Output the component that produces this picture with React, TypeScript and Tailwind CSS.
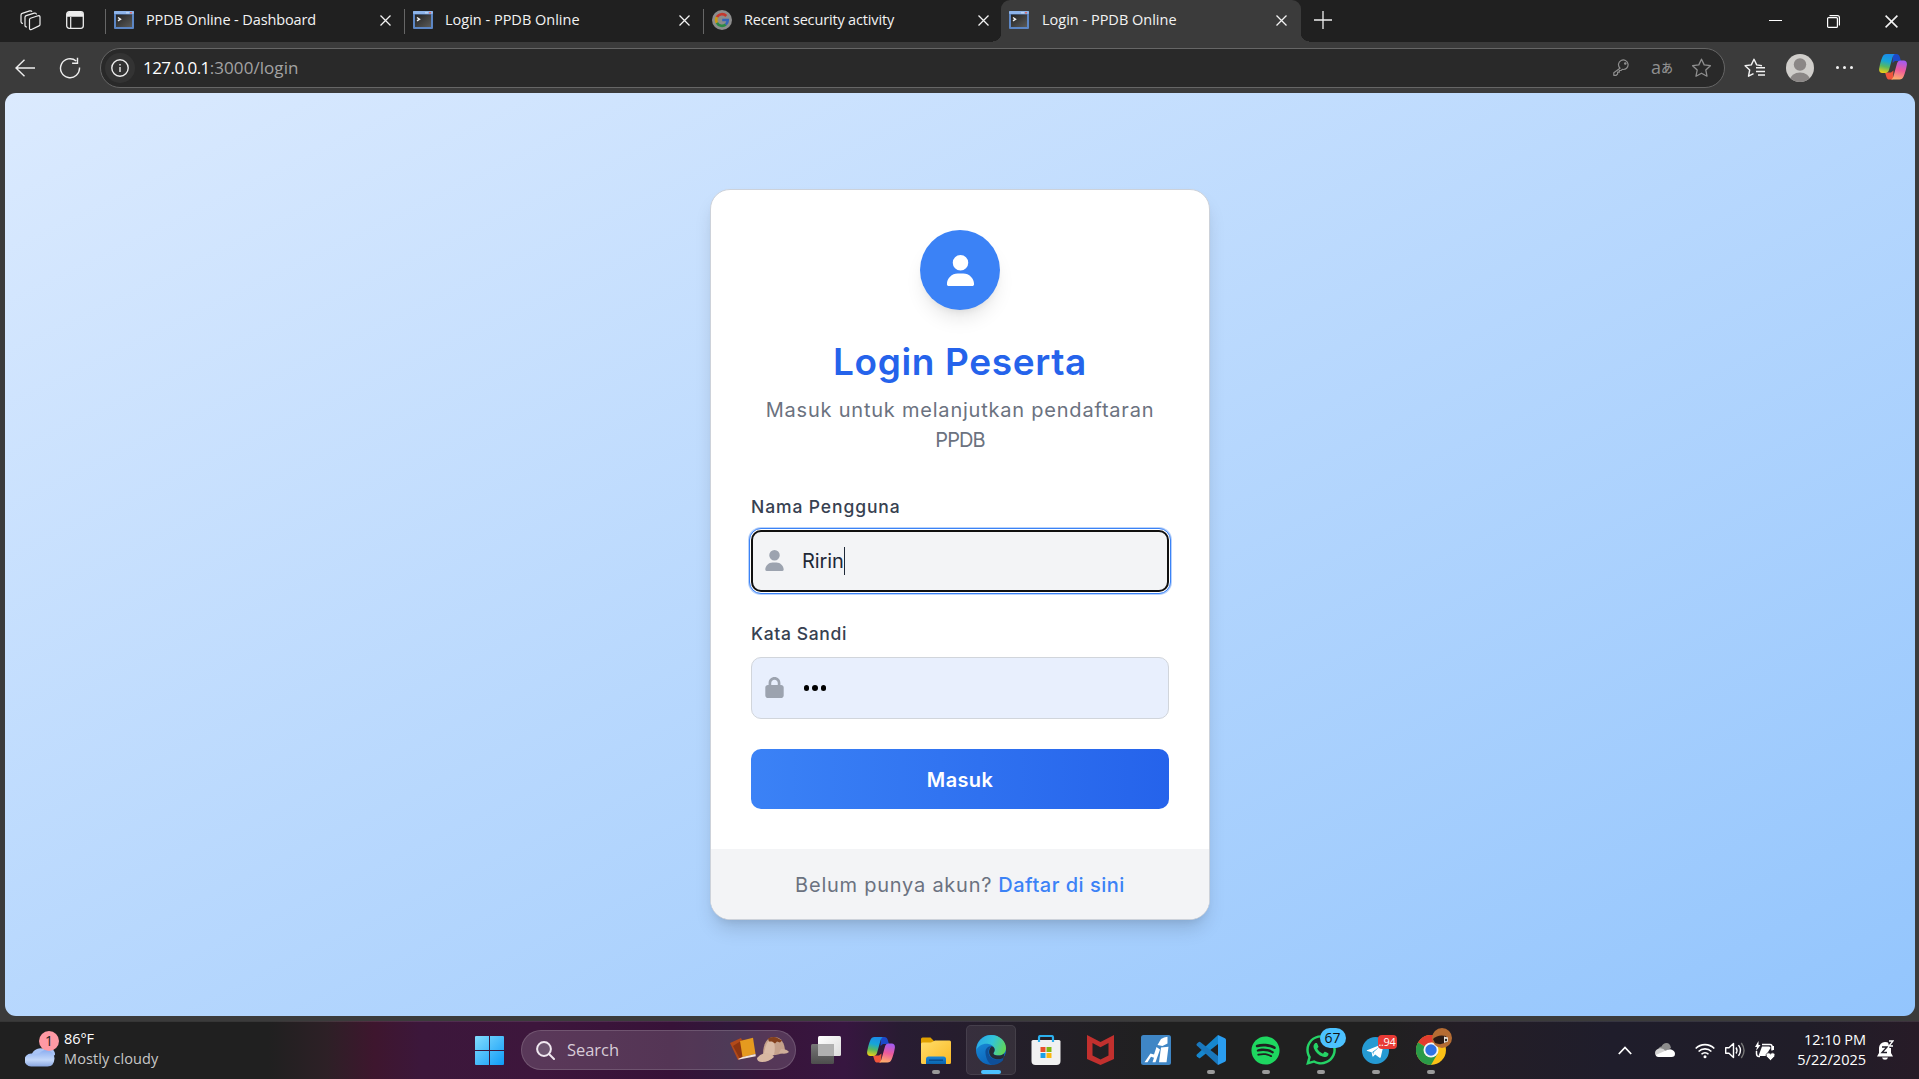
import React from "react";
import { FaSpotify, FaWhatsapp } from "react-icons/fa";
import { FaLock, FaUser } from "react-icons/fa6";

function TerminalFavicon() {
  return (
    <svg width="20" height="18" viewBox="0 0 20 18" className="shrink-0">
      <defs>
        <linearGradient id="term" x1="0" y1="0" x2="1" y2="1">
          <stop offset="0" stopColor="#222" />
          <stop offset="1" stopColor="#5a5a58" />
        </linearGradient>
      </defs>
      <rect width="20" height="18" rx="1" fill="#5c86c4" />
      <rect width="20" height="3" rx="1" fill="#8db4ea" />
      <rect x="16" y="1" width="2" height="1.5" fill="#d86a6a" />
      <rect x="12" y="1" width="3" height="1.5" fill="#b9d2f2" />
      <rect x="2" y="3.5" width="16" height="12.5" fill="url(#term)" />
      <path d="M4 6.5l2.5 1.7L4 9.8" fill="none" stroke="#f2f2f2" strokeWidth="1.4" />
    </svg>
  );
}

function GoogleFavicon() {
  return (
    <svg width="20" height="20" viewBox="0 0 20 20" className="shrink-0">
      <circle cx="10" cy="10" r="10" fill="#8d8d8d" />
      <g fill="none" strokeWidth="2.6">
        <path d="M14.3 6A5.8 5.8 0 0 0 4.9 7.2" stroke="#c5382e" />
        <path d="M4.9 7.2a5.8 5.8 0 0 0 0 5.6" stroke="#c99a12" />
        <path d="M4.9 12.8a5.8 5.8 0 0 0 8.9 1.6" stroke="#2b8a45" />
        <path d="M13.8 14.4A5.7 5.7 0 0 0 15.8 10H10.2" stroke="#3564b8" />
      </g>
    </svg>
  );
}

function CloseIcon({ size = 11 }: { size?: number }) {
  return (
    <svg width={size} height={size} viewBox="0 0 11 11" className="shrink-0">
      <path d="M.5.5l10 10M10.5.5l-10 10" stroke="#f3f3f3" strokeWidth="1.3" />
    </svg>
  );
}

function Copilot({ size }: { size: number }) {
  return (
    <svg width={size} height={size * 0.93} viewBox="0 0 28 26" className="shrink-0">
      <defs>
        <linearGradient id="cpA" x1="0.4" y1="0" x2="0.2" y2="1">
          <stop offset="0" stopColor="#1b8de8" />
          <stop offset=".35" stopColor="#16a5d8" />
          <stop offset=".65" stopColor="#58b860" />
          <stop offset="1" stopColor="#f5cf13" />
        </linearGradient>
        <linearGradient id="cpB" x1="0.6" y1="0" x2="0.4" y2="1">
          <stop offset="0" stopColor="#a35bf0" />
          <stop offset=".5" stopColor="#ee5a9a" />
          <stop offset="1" stopColor="#ffae6b" />
        </linearGradient>
      </defs>
      <path d="M14 0h3.4c1.8 0 2.7 1 3.2 2.6L22 7h-6l-2.5 2z" fill="#1c49c8" />
      <path d="M14 25.500h-3.400c-1.800 0-2.700-1-3.200-2.600L6 18.500h6l2.500-2z" fill="#f0553c" />
      <path d="M7.500 0H16c-1.400.6-2 2-2.500 3.600L10 16c-.6 1.800-1.600 2.900-3.600 2.900H3.300C.8 18.900-.3 17 .2 14.300 1 9.900 2 6.200 3.400 2.900 4.200 1 5.400 0 7.500 0z" fill="url(#cpA)" />
      <path d="M20.500 25.500H12c1.400-.6 2-2 2.500-3.600L18 9.500c.6-1.800 1.600-2.900 3.600-2.900h3.100c2.500 0 3.600 1.900 3.100 4.600-.8 4.400-1.800 8.100-3.200 11.400-.8 1.900-2 2.900-4.100 2.900z" fill="url(#cpB)" />
    </svg>
  );
}

type TabProps = { title: string; google?: boolean; tracking?: string };

function Tab({ title, google, tracking = "" }: TabProps) {
  return (
    <div className="flex h-[42px] w-[299px] items-center pb-[3px]">
      <div className="h-[25px] w-px bg-[#666] mt-1" />
      <div className="ml-2 flex w-5">{google ? <GoogleFavicon /> : <TerminalFavicon />}</div>
      <span className={"ml-3 flex-1 whitespace-nowrap text-[14.5px] leading-5 " + tracking}>{title}</span>
      <div className="mr-[13px] mt-0.5">
        <CloseIcon />
      </div>
    </div>
  );
}

function TabBar() {
  return (
    <div className="flex h-[42px] bg-[#202020] text-[#f3f3f3]">
      <div className="flex w-[105px] items-center gap-[25px] pl-5 pb-0.5">
        <svg width="21" height="21" viewBox="0 0 21 21" fill="none" stroke="#eee" strokeWidth="1.2" strokeLinejoin="round">
          <path d="M10.500 8.200l7.500-2.400q2-.5 2 1.300v7.400q0 1-1 1.400l-7.500 3.600q-2 .7-2-1.300V9.700q0-1.100 1-1.500z" />
          <path d="M7 17q-2 0-2-1.600V7.200q0-1.200 1.200-1.600l8-2.500q2-.4 2.300 1.400" />
          <path d="M3 13.500q-2-.2-2-1.800V5q0-1.200 1.200-1.600l7.500-2.500q1.800-.4 2.300.9" />
        </svg>
        <svg width="18" height="18" viewBox="0 0 18 18" fill="none">
          <rect x=".7" y=".7" width="16.600" height="16.600" rx="2.500" stroke="#eee" strokeWidth="1.300" />
          <path d="M1 5.800V3q0-2 2-2h12q2 0 2 2v2.800z" fill="#eee" />
          <path d="M4.700 6v11" stroke="#eee" strokeWidth="1.200" />
        </svg>
      </div>
      <Tab title="PPDB Online - Dashboard" tracking="tracking-[-0.110px]" />
      <Tab title="Login - PPDB Online" />
      <Tab title="Recent security activity" google tracking="tracking-[-0.161px]" />
      <div className="-ml-[9px] flex items-end">
        <div className="h-[9px] w-2 bg-[radial-gradient(circle_at_0_0,#202020_8px,#3b3b3b_8.500px)]" />
        <div className="flex h-[42px] w-[300px] items-center rounded-t-[9px] bg-[#3b3b3b] pb-[3px] pl-2">
          <TerminalFavicon />
          <span className="ml-[13px] flex-1 whitespace-nowrap text-[14.500px] leading-5">Login - PPDB Online</span>
          <div className="mr-[14px] mt-0.5">
            <CloseIcon />
          </div>
        </div>
        <div className="h-[9px] w-2 bg-[radial-gradient(circle_at_100%_0,#202020_8px,#3b3b3b_8.500px)]" />
      </div>
      <svg width="18" height="18" viewBox="0 0 18 18" className="ml-[5px] mt-[11px]">
        <path d="M9 0v18M0 9h18" stroke="#eee" strokeWidth="1.300" />
      </svg>
      <div className="ml-auto flex items-center gap-[45px] pr-[21px] pt-px">
        <div className="h-px w-[13px] bg-white -mt-0.5" />
        <svg width="13" height="13" viewBox="0 0 13 13" fill="none" stroke="#fff" strokeWidth="1.200">
          <rect x=".6" y="2.600" width="9.800" height="9.800" rx="1" />
          <path d="M2.500.6h8q1.900 0 1.900 1.900v8" />
        </svg>
        <CloseIcon size={13} />
      </div>
    </div>
  );
}

const STAR = "M10 1.200l2.700 5.700 6.200.8-4.600 4.300 1.200 6.200L10 15.200l-5.500 3 1.200-6.200L1.100 7.700l6.200-.8z";

function Toolbar() {
  return (
    <div className="flex h-[51px] items-center bg-[#3b3b3b]">
      <svg width="21" height="18" viewBox="0 0 21 18" className="ml-[15px]" fill="none" stroke="#eee" strokeWidth="1.400">
        <path d="M20 9H1M9.500.7L1 9l8.500 8.300" />
      </svg>
      <svg width="22" height="22" viewBox="0 0 22 22" className="ml-[23px]" fill="none" stroke="#eee" strokeWidth="1.400">
        <path d="M20.500 10.500A9.500 9.500 0 1 1 17.200 4M18.500.8v5.400h-5.400" />
      </svg>
      <div className="ml-[19px] flex h-10 w-[1625px] items-center rounded-full border border-[#666] bg-[#292929] pl-1 pr-3">
        <div className="flex size-[30px] items-center justify-center rounded-full bg-[#333]">
          <svg width="18" height="18" viewBox="0 0 18 18" fill="none" stroke="#eee" strokeWidth="1.400">
            <circle cx="9" cy="9" r="8.200" />
            <path d="M9 8v5M9 5v1.500" />
          </svg>
        </div>
        <div className="ml-2 flex flex-1 whitespace-nowrap text-[17px] leading-6">
          <span className="tracking-[-0.55px] text-white">127.0.0.1</span>
          <span className="tracking-[0.06px] text-[#a3a3a3]">:3000/login</span>
        </div>
        <div className="flex items-center text-[#8f8f8f]">
          <svg width="17" height="17" viewBox="0 0 17 17" fill="none" stroke="currentColor" strokeWidth="1.200">
            <path d="M7 9.200A4.800 4.800 0 1 1 9.300 10.400L8 11.500H6.300v1.700H4.600V15L3.200 16.300H.8v-2.600z" strokeLinejoin="round" />
            <circle cx="12.300" cy="4.500" r=".7" fill="currentColor" />
          </svg>
          <div className="ml-[21px] flex w-[22px] items-center leading-5">
            <span className="text-[18px] -mt-0.5">a</span>
            <span className="font-['Noto_Sans_CJK_JP',sans-serif] text-[12px] font-medium">あ</span>
          </div>
          <svg width="21" height="20" viewBox="0 0 20 20" className="ml-[18px]" fill="none" stroke="currentColor" strokeWidth="1.300" strokeLinejoin="round">
            <path d={STAR} />
          </svg>
        </div>
      </div>
      <svg width="21" height="20" viewBox="0 0 21 20" className="ml-[19px]" fill="none" stroke="#f3f3f3" strokeWidth="1.400" strokeLinejoin="round">
        <path d="M18 7.700L12.700 6.900 10 1.200 7.300 6.900l-6.200.8 4.600 4.300-1.200 6.200 5-2.600M12 9.700h9M12 13.500h9M14 17h7" />
      </svg>
      <svg width="28" height="28" viewBox="0 0 28 28" className="ml-[21px]">
        <clipPath id="face"><circle cx="14" cy="14" r="14" /></clipPath>
        <g clipPath="url(#face)">
          <rect width="28" height="28" fill="#d0cecb" />
          <circle cx="14" cy="10.500" r="6.200" fill="#8b8786" />
          <ellipse cx="14" cy="26" rx="10" ry="7.500" fill="#8b8786" />
        </g>
      </svg>
      <div className="ml-[22px] flex gap-1">
        <div className="size-[3px] rounded-full bg-[#f3f3f3]" />
        <div className="size-[3px] rounded-full bg-[#f3f3f3]" />
        <div className="size-[3px] rounded-full bg-[#f3f3f3]" />
      </div>
      <div className="ml-[26px]">
        <Copilot size={28} />
      </div>
    </div>
  );
}

function LoginCard() {
  return (
    <div className="flex h-[731px] w-[500px] flex-col overflow-hidden rounded-[20px] border border-[#cdd2da] bg-white font-[Inter,sans-serif] shadow-[0_12px_19px_-4px_rgba(0,0,0,0.15),0_5px_8px_-5px_rgba(0,0,0,0.1)]">
      <div className="flex flex-1 flex-col items-center px-10 pt-10">
        <div className="flex size-20 items-center justify-center rounded-full bg-[#3b82f6] shadow-[0_12px_19px_-4px_rgba(0,0,0,0.1),0_5px_8px_-5px_rgba(0,0,0,0.1)]">
          <FaUser className="size-[31px] text-white" />
        </div>
        <h1 className="mt-[29px] whitespace-nowrap text-[37px] font-semibold leading-[45px] tracking-[0.620px] text-[#2563eb]">Login Peserta</h1>
        <p className="mt-[11px] text-center text-[20px] leading-[30px] text-[#6b7280]">
          <span className="whitespace-nowrap tracking-[0.780px]">Masuk untuk melanjutkan pendaftaran</span>
          <br />
          <span className="tracking-[-0.900px]">PPDB</span>
        </p>
        <div className="mt-[39px] w-full">
          <div className="text-[17.500px] font-medium leading-[26px] tracking-[0.900px] text-[#374151]">Nama Pengguna</div>
          <div className="mt-2.5 flex h-[62px] items-center rounded-[10px] border-2 border-[#101010] bg-[#f3f4f6] pl-[11px] outline-1 outline-offset-1 outline-[#3b82f6] shadow-[0_0_0_1px_#fff,0_0_0_3px_#b9d3fb]">
            <FaUser className="mb-px size-[21px] text-[#9ca3af]" />
            <span className="ml-[17px] text-[20px] tracking-[-0.100px] text-[#1f2937]">Ririn</span>
            <span className="h-7 w-px bg-[#1f2937]" />
          </div>
        </div>
        <div className="mt-[29px] w-full">
          <div className="text-[17.500px] font-medium leading-[26px] tracking-[0.640px] text-[#374151]">Kata Sandi</div>
          <div className="mt-2.5 flex h-[62px] items-center rounded-[10px] border border-[#d1d5db] bg-[#e8effd] pl-3">
            <FaLock className="mb-px size-[21px] text-[#9ca3af]" />
            <div className="ml-[18.500px] flex gap-[3px]">
              <div className="size-[5.500px] rounded-full bg-black" />
              <div className="size-[5.500px] rounded-full bg-black" />
              <div className="size-[5.500px] rounded-full bg-black" />
            </div>
          </div>
        </div>
        <button className="mt-[30px] h-[60px] w-full rounded-[10px] bg-[linear-gradient(90deg,#3b82f6,#2563eb)] pt-px text-[20px] font-semibold tracking-[0.350px] text-white">Masuk</button>
      </div>
      <div className="flex h-[70px] items-center justify-center whitespace-nowrap bg-[#f3f4f6] pt-px text-[20px] text-[#6b7280]">
        <span className="tracking-[0.760px]">Belum punya akun?</span>
        <span className="ml-1.5 font-medium tracking-[0.500px] text-[#3b82f6]">Daftar di sini</span>
      </div>
    </div>
  );
}

function DockItem({ children, open, active }: { children: React.ReactNode; open?: boolean; active?: boolean }) {
  return (
    <div className="flex w-[55px] justify-center">
      <div className={active ? "relative flex size-[50px] items-center justify-center rounded-[5px] border border-white/8 bg-white/8" : "relative flex size-[50px] items-center justify-center"}>
        {children}
        {active && <div className="absolute bottom-0 h-1 w-5 rounded-full bg-[#4cc2ff]" />}
        {open && <div className="absolute bottom-px h-1 w-2 rounded-full bg-[#9a9a9a]" />}
      </div>
    </div>
  );
}

function DockIcons() {
  return (
    <div className="flex items-center">
      <DockItem>
        <svg width="30" height="28" viewBox="0 0 30 28">
          <defs>
            <linearGradient id="tvA" x1="0" y1="0" x2="0" y2="1"><stop offset="0" stopColor="#777" /><stop offset="1" stopColor="#4d4d4d" /></linearGradient>
            <linearGradient id="tvB" x1="0" y1="0" x2="1" y2="1"><stop offset="0" stopColor="#fff" /><stop offset="1" stopColor="#dcdcdc" /></linearGradient>
          </defs>
          <rect x="7" y="0" width="23" height="20" rx="1.500" fill="url(#tvB)" />
          <rect x="0" y="8" width="23" height="20" rx="1.500" fill="url(#tvA)" />
          <rect x="7" y="8" width="16" height="12" fill="#b0b0b0" />
        </svg>
      </DockItem>
      <DockItem><Copilot size={28} /></DockItem>
      <DockItem open>
        <svg width="30" height="27" viewBox="0 0 30 27">
          <defs>
            <linearGradient id="fo" x1="0" y1="0" x2="1" y2="1"><stop offset="0" stopColor="#ffdd6b" /><stop offset="1" stopColor="#fbb924" /></linearGradient>
            <linearGradient id="fb" x1="0" y1="0" x2="0" y2="1"><stop offset="0" stopColor="#1a87d8" /><stop offset="1" stopColor="#0a63ad" /></linearGradient>
          </defs>
          <path d="M0 2Q0 .5 1.500.500H9.500L13 4H28v6H0z" fill="#e0a000" />
          <path d="M0 7Q0 5.500 1.500 5.500H10L14 3.500H28.500Q30 3.500 30 5V25.500Q30 27 28.500 27H1.500Q0 27 0 25.500z" fill="url(#fo)" />
          <path d="M5 27V22q0-2.500 2.500-2.500h15Q25 19.500 25 22V27z" fill="url(#fb)" />
          <path d="M8 23.200H22" stroke="#0a4a8a" strokeWidth="1.400" />
        </svg>
      </DockItem>
      <DockItem active>
        <svg width="30" height="30" viewBox="0 0 30 30">
          <defs>
            <linearGradient id="eg" x1="0" y1="0.300" x2="1" y2="0.600"><stop offset="0" stopColor="#2aa9e8" /><stop offset=".5" stopColor="#32c4d8" /><stop offset="1" stopColor="#62d654" /></linearGradient>
            <linearGradient id="eb" x1="0" y1="0" x2="0.500" y2="1"><stop offset="0" stopColor="#1c93de" /><stop offset="1" stopColor="#0b62b8" /></linearGradient>
          </defs>
          <circle cx="15" cy="15" r="15" fill="url(#eb)" />
          <path d="M1 11C3 4 9 0 15 0c9 0 15 6.500 15 13 0 5-3.500 7.500-7.500 7.500-4 0-5.500-1.600-5-2.600C20 15 18.500 10 12.500 9 7 8.200 2 11 .5 15Q.4 13 1 11z" fill="url(#eg)" />
          <path d="M9.500 18C9 12.500 13 11 15.500 11.200 12 13 10.500 20 16.500 23.500c4 2.200 8.500 1.200 10.800-.3.700-.3 1.200.2.700.9C25 28.500 20 30 16.500 30 12.500 29 9.800 23 9.500 18z" fill="#0f4f98" />
          <path d="M17.500 17.900c-.5 1 1 2.600 5 2.600 2.400 0 4.500-.8 5.900-2.300L27.500 23c-4 2-9 1.500-11.500-.5-4-3.500-3.500-8.500-.5-11.300 2.500.3 4.500 3.300 2 6.700z" fill="#252b35" />
          <path d="M30 18.500l1 4-4 3 .5-3z" fill="#343038" />
        </svg>
      </DockItem>
      <DockItem>
        <svg width="30" height="30" viewBox="0 0 30 30">
          <path d="M8 7V2.500Q8 1 9.500 1h11Q22 1 22 2.500V7" fill="none" stroke="#2bb0ee" strokeWidth="2.200" />
          <path d="M.5 6.500Q.5 5 2 5H28q1.500 0 1.500 1.500V26q0 4-4 4H4.500q-4 0-4-4z" fill="#f1f1f1" />
          <path d="M8 5v2M22 5v2" stroke="#2bb0ee" strokeWidth="2.200" />
          <path fill="#e8502a" d="M9.500 12h5v5h-5z" /><path fill="#80b813" d="M15.500 12h5v5h-5z" />
          <path fill="#1a9fe6" d="M9.500 18h5v5h-5z" /><path fill="#fbb70f" d="M15.500 18h5v5h-5z" />
        </svg>
      </DockItem>
      <DockItem>
        <svg width="27" height="30" viewBox="0 0 27 30">
          <path d="M0 0L13.500 7 27 0V24L13.500 30 0 24zM5.500 8V20.500L13.500 24.500 21.500 20.500V8L13.500 12.300z" fillRule="evenodd" fill="#c2302e" />
        </svg>
      </DockItem>
      <DockItem>
        <svg width="30" height="30" viewBox="0 0 30 30">
          <rect width="30" height="30" rx="2.500" fill="#3f86c5" />
          <path d="M16.500 10L20 4q3-2 6.500-2.200V8.500L21.500 11z" fill="#fff" />
          <path d="M3.500 27.200L9.500 18.500l3.500 1 2.500-7.500 3.500 2.500-4.500 12.700h-3l1.500-4.500-3-1-3.500 5.500z" fill="#fff" />
          <path d="M20 12.500l7.500-.8-2 15.500H18z" fill="#fff" />
        </svg>
      </DockItem>
      <DockItem open>
        <svg width="30" height="30" viewBox="0 0 30 30">
          <path d="M22 0L.8 19.600q-.8.800 0 1.600l2 1.700q.6.500 1.400 0L22 9z" fill="#1687ce" />
          <path d="M22 30L.8 10.400q-.8-.8 0-1.600l2-1.700q.6-.5 1.400 0L22 21z" fill="#1a78bd" />
          <path d="M22 0L29 3.200Q30 3.700 30 5V25Q30 26.300 29 26.800L22 30z" fill="#2a9df0" />
        </svg>
      </DockItem>
      <DockItem open><FaSpotify className="size-[29px] text-[#1ed760]" /></DockItem>
      <DockItem open>
        <FaWhatsapp className="size-[34px] text-[#25d366]" />
        <div className="absolute right-0 top-[3px] flex h-5 w-[26px] items-center justify-center rounded-full bg-[#4cc2ff] text-[14px] leading-5 text-[#111]">67</div>
      </DockItem>
      <DockItem open>
        <svg width="27" height="27" viewBox="0 0 27 27">
          <circle cx="13.500" cy="13.500" r="13.500" fill="#259ad3" />
          <path d="M5 13.200L20.500 7q1.300-.4 1 1.200L18.800 20q-.4 1.300-1.600.6l-4-3-2 2q-.6.500-.8-.5l-.8-3.900L5.200 14q-1-.4-.2-.8zm5.400 1.700l.9 2.900.3-2.500 6.500-6z" fill="#fff" />
        </svg>
        <div className="absolute right-1 top-2.5 flex h-[14px] w-[19px] items-center justify-center rounded-[4px] bg-[#e83a35] text-[11px] leading-[14px] tracking-[-0.3px] text-white">..94</div>
      </DockItem>
      <DockItem open>
        <svg width="30" height="30" viewBox="0 0 30 30">
          <circle cx="15" cy="15" r="15" fill="#fbc116" />
          <path d="M15 15L2 7.500A15 15 0 0 1 28 7.500H15z" fill="#e33b2e" />
          <path d="M2 7.500A15 15 0 0 0 15 30l6.500-11.200L15 15z" fill="#2a9a48" />
          <circle cx="15" cy="15" r="7.500" fill="#f4f4f4" /><circle cx="15" cy="15" r="5.700" fill="#2f72e4" />
        </svg>
        <svg width="20" height="20" viewBox="0 0 20 20" className="absolute right-1 top-[3px]">
          <circle cx="10" cy="10" r="10" fill="#b56c33" />
          <path d="M1 11q5-5 13-3l2 5q-6 5-13 2z" fill="#2b1b16" />
          <path d="M12 8.500l4 1v4l-4 1.500z" fill="#e8e0d8" /><circle cx="14" cy="12" r="1.200" fill="#222" />
        </svg>
      </DockItem>
    </div>
  );
}

function Taskbar() {
  return (
    <div className="relative flex h-[58px] items-center border-t border-white/10 bg-[linear-gradient(90deg,#202020_0%,#202020_14%,#2d2026_17%,#3e162e_19.500%,#3c173b_22%,#3d163c_28%,#371238_35%,#30183a_38%,#38143a_40%,#371640_44%,#281c32_47%,#231f28_54%,#202020_60%,#202020_72%,#241e26_76%,#1f1d2b_84%,#201d28_94%,#271b27_100%)] pb-px text-[14.500px] text-white">
      <div className="flex w-[467px] items-center pl-[25px] pb-0.5">
        <div className="relative">
          <svg width="34" height="36" viewBox="0 0 34 36" className="block">
            <defs><linearGradient id="cl" x1="0" y1="0" x2="0" y2="1"><stop offset="0" stopColor="#8caef0" /><stop offset=".6" stopColor="#c3d8fa" /><stop offset="1" stopColor="#8aa7e0" /></linearGradient></defs>
            <circle cx="23" cy="15" r="6.500" fill="#f5820d" />
            <path d="M6.500 24A9.500 9.500 0 0 1 20 18.500q2-1.500 5-1.200a6.800 6.800 0 0 1 5 7z" fill="#a9c4f6" />
            <path d="M6 35.500a6.500 6.500 0 0 1 0-13q2.500-.2 4 1 2-1 4.500-1 2-3.500 7-3.500a8.300 8.300 0 0 1 8 8.500q-.5 8-7 8z" fill="url(#cl)" />
          </svg>
          <div className="absolute left-[14px] top-0 flex size-5 items-center justify-center rounded-full bg-[#ff99a4] text-[14px] leading-5 text-[#1d1d1d]">1</div>
        </div>
        <div className="ml-[5px] leading-5">
          <div className="tracking-[-0.070px]">86°F</div>
          <div className="tracking-[0.124px] text-[#c8c8c8]">Mostly cloudy</div>
        </div>
      </div>
      <svg width="29" height="29" viewBox="0 0 29 29" className="ml-2">
        <defs><linearGradient id="win" x1="0" y1="0" x2="1" y2="1"><stop offset="0" stopColor="#82dcfd" /><stop offset="1" stopColor="#0f9bf8" /></linearGradient></defs>
        <path d="M0 1q0-1 1-1h13v14H0zM15 0h13q1 0 1 1v13H15zM0 15h14v14H1q-1 0-1-1zM15 15h14v13q0 1-1 1H15z" fill="url(#win)" />
      </svg>
      <div className="ml-[17px] flex h-10 w-[275px] items-center rounded-full border border-white/15 bg-white/15 pl-[14px] pr-1.5">
        <svg width="19" height="19" viewBox="0 0 19 19" fill="none" stroke="#f0e8f0" strokeWidth="2" strokeLinecap="round">
          <circle cx="8" cy="8" r="6.900" fill="#6d5570" /><path d="M13 13l5 5" />
        </svg>
        <span className="ml-[12px] flex-1 text-[16.500px] tracking-[-0.040px] text-[#d8ccd8]">Search</span>
        <svg width="59" height="26" viewBox="0 0 59 26">
          <path d="M0 6L11 1l8 17-11 5z" fill="#b24a1a" /><path d="M3 9L14 2l5 16-9 4z" fill="#8d3511" />
          <path d="M10 4L23 .8 25.500 17 12.500 20z" fill="#e59a1f" /><path d="M8 22l4.500-2 13-3 .3 2.300L9 22.500z" fill="#f2e4dc" />
          <path d="M33 17C33 7 37 0 44 0s11 6 11 15q-9 5-22 2z" fill="#c5a18b" />
          <path d="M34 16q2-13 9-15 3 9 1 17-5 1-10-2z" fill="#dabba6" />
          <path d="M38 1.500q4-2 8-1.200l6 3.200-2 2-3-1-2 2-3-2-3 0z" fill="#84401d" />
          <path d="M27 21q4-5 10-5 6 1 7 4-5 5-12 5-5 0-5-4z" fill="#d8b8a2" />
          <path d="M51 12q6 0 8 3-3 3-10 1z" fill="#cfae99" />
        </svg>
      </div>
      <div className="ml-[2px]"><DockIcons /></div>
      <div className="absolute right-0 top-0 flex h-[57px] items-center pr-[25px]">
        <svg width="14" height="9" viewBox="0 0 14 9" className="mr-[23px]" fill="none" stroke="#fff" strokeWidth="1.800"><path d="M.8 8L7 1.500 13.200 8" /></svg>
        <svg width="20" height="14" viewBox="0 0 20 14" className="mr-5 mb-0.5">
          <path d="M3 7Q4 3.500 6.500 3.500 8 0 11.500 0q3.500 0 4.500 5L9 9z" fill="#8c8c8c" />
          <path d="M4 13.500Q0 13.500 0 10t4-4.500q4-1 7 3l-4 5z" fill="#d2d2d2" />
          <path d="M3.500 14Q1 14 .8 12L12 7q4-2 6.500.8 1.500 1.200 1.500 3 0 3.200-3.500 3.200z" fill="#fff" />
        </svg>
        <svg width="20" height="16" viewBox="0 0 20 16" className="mr-[10px]" fill="none" stroke="#fff" strokeWidth="1.600">
          <path d="M.7 5.500a13 13 0 0 1 18.600 0M3.600 8.500a9 9 0 0 1 12.800 0M6.500 11.300a5 5 0 0 1 7 0" /><circle cx="10" cy="13.800" r="1.500" fill="#fff" stroke="none" />
        </svg>
        <svg width="21" height="17" viewBox="0 0 21 17" className="mr-[9px]" fill="none" stroke="#fff" strokeWidth="1.400" strokeLinejoin="round">
          <path d="M.7 5.700H4L8.500 1.500V15.500L4 11.300H.7z" /><path d="M11 5.500q2 3 0 6M13.500 3.200q4 5.300 0 10.600" /><path d="M16.300 1q5.500 7.500 0 15" stroke="#777" />
        </svg>
        <svg width="21" height="20" viewBox="0 0 21 20" className="mr-[21px]">
          <path d="M7 3.500h8q2 0 2 2v4M5 15.500H4q-2.500 0-2.500-3V10" stroke="#fff" strokeWidth="1.500" fill="none" /><path d="M3.500 0L0 6h2L1 10l4.500-6h-2z" fill="#fff" />
          <path d="M7 5.500h7q1.500 0 1.500 1.500l-5 8H5q-1.500 0-1-1.500z" fill="#fff" />
          <path d="M18 5v4" stroke="#fff" strokeWidth="2" />
          <path d="M15.500 19.500l-4-4q-1.200-2.200.8-3.500 2-.6 3.200 1 1.200-1.600 3.200-1 2 1.300.8 3.500z" fill="#fff" stroke="#211e29" strokeWidth=".6" />
        </svg>
        <div className="mr-[11px] flex flex-col items-end pb-0.5 leading-5">
          <span className="tracking-[-0.060px]">12:10 PM</span>
          <span>5/22/2025</span>
        </div>
        <svg width="17" height="20" viewBox="0 0 17 20" className="mb-0.5">
          <path d="M2 13V8a6 6 0 0 1 6-6q5 0 6 5v6l2 3.500H0z" fill="#fff" /><path d="M5 17.500h6q-.5 2.300-3 2.300t-3-2.300z" fill="#fff" />
          <path d="M5 7h5l-5 5.500h5" stroke="#211e29" strokeWidth="1.400" fill="none" />
          <path d="M10.500 0H17v8h-4.500z" fill="#231c28" />
          <path d="M12 1h4l-4 5h4" stroke="#fff" strokeWidth="1.300" fill="none" />
        </svg>
      </div>
    </div>
  );
}

export default function App() {
  return (
    <div className="flex h-[1079px] w-[1919px] flex-col overflow-hidden bg-[#3b3b3b] font-['Open_Sans',sans-serif]">
      <TabBar />
      <Toolbar />
      <div className="ml-[5px] mr-1 mb-[5px] flex flex-1 items-center justify-center rounded-[11px] bg-[linear-gradient(to_bottom_right,#dbeafe,#93c5fd)]">
        <LoginCard />
      </div>
      <Taskbar />
    </div>
  );
}
